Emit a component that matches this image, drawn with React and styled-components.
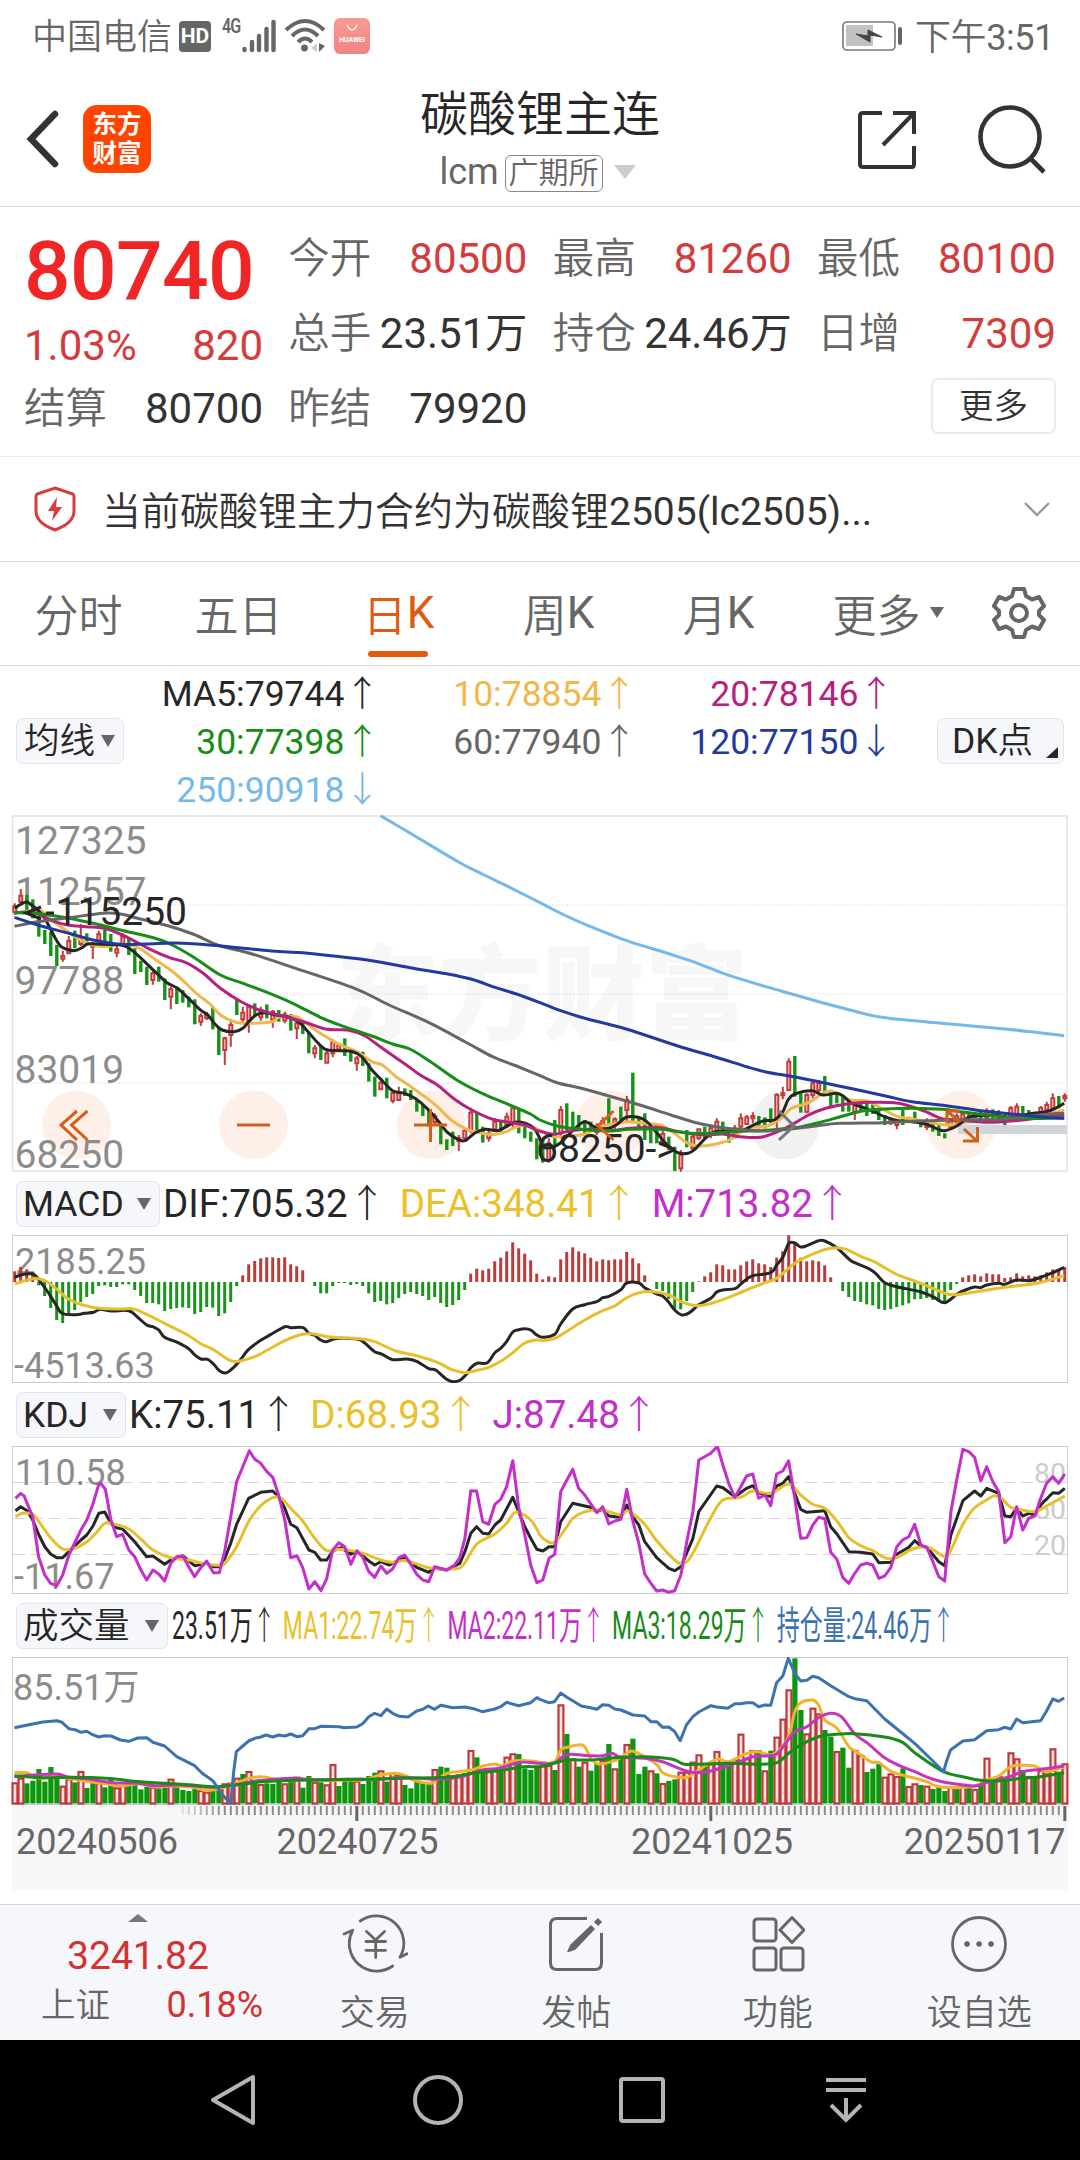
import React from "react"
import styled, { createGlobalStyle } from "styled-components"

const GlobalStyle = createGlobalStyle`
  * {
    box-sizing: border-box;
  }
  body {
    margin: 0;
    background: #fff;
    font-family: Roboto, "Noto Sans CJK SC", sans-serif;
    color: #333;
  }
  svg {
    display: block;
    flex-shrink: 0;
  }
`

const RED = "#d23c3c"
const ORANGE = "#e05a10"

const Screen = styled.main`
  width: 1080px;
  height: 2160px;
  display: flex;
  flex-direction: column;
  overflow: hidden;
`

// keeps latin letters and digits at regular weight beside lighter hanzi
const Latin = styled.span`
  font-weight: 400;
`

/* status bar */

const StatusBar = styled.div`
  height: 74px;
  padding: 0 26px 2px 32px;
  display: flex;
  align-items: center;
  justify-content: space-between;
  font-size: 35px;
  font-weight: 350;
  color: #666;
`

StatusBar.Group = styled.div`
  display: flex;
  align-items: center;
  white-space: nowrap;
`

StatusBar.Name = styled.span`
  line-height: 40px;
  padding-top: 3px;
`

StatusBar.Time = styled.span`
  margin-left: 12px;
  padding-top: 3px;
  font-size: 36px;
  line-height: 40px;
  letter-spacing: -0.4px;
`

const HdBadge = styled.span`
  width: 32px;
  height: 31px;
  margin: 0 11px 0 7px;
  border-radius: 4px;
  background: #666;
  color: #fff;
  font-size: 21px;
  font-weight: 700;
  line-height: 31px;
  text-align: center;
`

const NetType = styled.span`
  align-self: flex-start;
  width: 20px;
  margin-top: 1px;
  font-size: 20px;
  font-weight: 600;
  line-height: 20px;
  letter-spacing: -1px;
  transform: scaleX(0.8);
  transform-origin: left;
`

const StoreBadge = styled.span`
  width: 36px;
  height: 36px;
  margin-left: 9px;
  border-radius: 6px;
  background: linear-gradient(#f79a94, #f08484);
`

/* title bar */

const Header = styled.header`
  height: 133px;
  padding: 0 33px 0 26px;
  border-bottom: 1px solid #d6d6d6;
  display: grid;
  grid-template-columns: 1fr auto 1fr;
  align-items: center;
`

Header.Side = styled.div`
  display: flex;
  align-items: center;
  justify-content: ${(p) => (p.$end ? "flex-end" : "flex-start")};
  gap: ${(p) => (p.$end ? 60 : 22)}px;
  padding-bottom: ${(p) => (p.$end ? 1 : 2)}px;
`

Header.Title = styled.h1`
  margin: -5px 0 0;
  padding-left: 7px;
  font-size: 48px;
  font-weight: 350;
  line-height: 64px;
  color: #262626;
  text-align: center;
`

Header.Sub = styled.div`
  display: flex;
  align-items: center;
  justify-content: center;
  padding: 5px 0 0 2px;
  font-size: 36px;
  line-height: 40px;
  color: #666;
`

const Exchange = styled.span`
  margin: 2px 11px 0 6px;
  padding: 0 3px;
  height: 37px;
  border: 1px solid #888;
  border-radius: 6px;
  font-size: 30px;
  font-weight: 350;
  line-height: 34px;
`

const Logo = styled.div`
  width: 68px;
  height: 68px;
  border-radius: 14px;
  background: #ff4400;
  color: #fff;
  font-size: 24.5px;
  font-weight: 700;
  line-height: 29px;
  padding-top: 5px;
  text-align: center;
`

const Triangle = styled.i`
  width: 0;
  height: 0;
  border: solid transparent;
  border-width: ${(p) => p.$h}px ${(p) => p.$w / 2}px 0;
  border-top-color: ${(p) => p.$color || "#666"};
`

/* quote */

const Quote = styled.section`
  height: 250px;
  border-bottom: 1px solid #ebebeb;
  padding: 14px 24px 0 24px;
  display: grid;
  grid-template-columns: repeat(4, 239px);
  grid-template-rows: 75px 75px 75px;
  justify-content: space-between;
`

Quote.Main = styled.div`
  grid-row: span 2;
  display: flex;
  flex-direction: column;
`

Quote.Price = styled.strong`
  font-size: 82px;
  font-weight: 500;
  line-height: 100px;
  height: 100px;
  letter-spacing: -0.6px;
  color: #f02626;
`

const Pair = styled.div`
  display: flex;
  align-items: center;
  justify-content: space-between;
  white-space: nowrap;
  font-size: 42px;
  line-height: 50px;
  color: ${(p) => (p.$up ? RED : "#333")};
`

Pair.Label = styled.span`
  font-size: 41.5px;
  font-weight: 350;
  color: #666;
`

const MoreButton = styled.button`
  grid-column: 4;
  justify-self: end;
  align-self: center;
  width: 125px;
  height: 56px;
  margin-bottom: 5px;
  padding: 0;
  background: #fff;
  border: 2px solid #ebebeb;
  border-radius: 7px;
  font: 350 34.5px/48px Roboto, "Noto Sans CJK SC", sans-serif;
  color: #333;
`

const Notice = styled.section`
  height: 105px;
  padding: 0 29px 0 34px;
  border-bottom: 1px solid #d6d6d6;
  display: flex;
  align-items: center;
  font-size: 39px;
  font-weight: 350;
  color: #333;
`

Notice.Text = styled.span`
  flex: 1;
  margin-left: 26px;
  padding-bottom: 2px;
  white-space: nowrap;
`

/* period tabs */

const Tabs = styled.nav`
  height: 104px;
  border-bottom: 1px solid #d6d6d6;
  display: grid;
  grid-template-columns: repeat(6, 160px) 1fr;
`

const Tab = styled.div`
  position: relative;
  display: flex;
  align-items: center;
  justify-content: center;
  padding: 0 3px 2px ${(p) => p.$shift || 0}px;
  font-size: 44px;
  font-weight: 350;
  color: ${(p) => (p.$active ? ORANGE : "#666")};
  ${Triangle} {
    margin-left: 9px;
  }
  &::after {
    content: "";
    display: ${(p) => (p.$active ? "block" : "none")};
    position: absolute;
    bottom: 8px;
    left: 48px;
    width: 60px;
    height: 6px;
    border-radius: 3px;
    background: ${ORANGE};
  }
`

/* indicator legends */

const Averages = styled.div`
  height: 149px;
  padding: 0 16px;
  display: grid;
  grid-template-columns: 107px 257px 257px 257px 1fr;
  grid-template-rows: 48px 48px 49px;
  align-items: center;
  font-size: 35.5px;
`

Averages.Item = styled.span`
  grid-column: ${(p) => p.$col};
  grid-row: ${(p) => p.$row};
  text-align: right;
  white-space: nowrap;
  color: ${(p) => p.$color};
`

const Picker = styled.div`
  height: 46px;
  flex-shrink: 0;
  width: ${(p) => p.$width}px;
  margin-top: ${(p) => (p.$col ? 5 : 0)}px;
  grid-row: 2;
  grid-column: ${(p) => p.$col || "auto"};
  justify-self: ${(p) => (p.$col === 5 ? "end" : "start")};
  padding: 0 ${(p) => p.$pad || 8}px 0 ${(p) => p.$lead || 6}px;
  display: flex;
  align-items: center;
  justify-content: space-between;
  border: 1px solid #e2e4ea;
  border-radius: 7px;
  background: #f6f7fa;
  font-size: 35.5px;
  line-height: 44px;
  color: #262626;
  white-space: nowrap;
`

const Hanzi = styled.span`
  font-weight: 350;
`

const Corner = styled.i`
  align-self: flex-end;
  margin-bottom: 5px;
  margin-left: auto;
  border-style: solid;
  border-width: 0 0 11px 12px;
  border-color: transparent transparent #262626;
`

const Legend = styled.div`
  height: ${(p) => p.$h}px;
  padding-left: 16px;
  display: flex;
  align-items: center;
`

Legend.Values = styled.div`
  display: flex;
  gap: ${(p) => p.$gap}px;
  margin-left: ${(p) => p.$left || 3}px;
  padding-bottom: 8px;
  font-size: 38.5px;
  white-space: nowrap;
  transform: scaleX(${(p) => p.$squeeze || 1});
  transform-origin: left;
`

const Value = styled.span`
  color: ${(p) => p.$color};
`

const Arrow = styled.span`
  font-weight: 300;
`

const DateAxis = styled.div`
  height: 85px;
  margin: 0 12px 14px;
  background: #f7f7fa;
`

/* bottom bars */

const ActionBar = styled.footer`
  height: 136px;
  border-top: 1px solid #d2d4dd;
  background: #f6f7fa;
  display: grid;
  grid-template-columns: 274px repeat(4, 1fr);
`

const IndexBox = styled.div`
  display: flex;
  flex-direction: column;
  align-items: center;
  padding: 9px 0 0 2px;
  font-size: 39px;
  line-height: 42px;
  color: #d63030;
`

IndexBox.Up = styled.i`
  border: solid transparent;
  border-width: 0 10px 8px;
  border-bottom-color: #77777c;
  margin-bottom: 13px;
`

IndexBox.Row = styled.div`
  width: 222px;
  margin-top: 7px;
  margin-left: 28px;
  display: flex;
  justify-content: space-between;
  align-items: center;
  font-size: 36px;
`

IndexBox.Name = styled.span`
  font-size: 34.5px;
  font-weight: 350;
  color: #666;
`

const Action = styled.div`
  display: flex;
  flex-direction: column;
  align-items: center;
  gap: 15px;
  padding-top: 9px;
  font-size: 35px;
  font-weight: 350;
  line-height: 50px;
  color: #666;
`

const SystemNav = styled.div`
  height: 120px;
  background: #000;
  padding: 0 132px;
  display: grid;
  grid-template-columns: repeat(4, 1fr);
  align-items: center;
  justify-items: center;
`

/* chart data: traces hold "x,y" samples, 2.9037 per px across and 3 per px down,
   the second list starts at the middle of the screen */

const SX = 2.9037
const barX = (i) => 14.8 + i * 6

const points = (left, right) => {
  const read = (s, dx) =>
    s
      .trim()
      .split(/\s+/)
      .filter(Boolean)
      .map((p) => p.split(",").map(Number))
      .map(([x, y]) => [x / SX + dx, y / 3])
  return [...read(left, 0), ...read(right, 540)]
}

const curve = (pts) => {
  let d = `M${pts[0][0].toFixed(1)} ${pts[0][1].toFixed(1)}`
  for (let i = 0; i < pts.length - 1; i++) {
    const a = pts[i - 1] || pts[i]
    const b = pts[i]
    const c = pts[i + 1]
    const e = pts[i + 2] || c
    const n = [
      b[0] + (c[0] - a[0]) / 6,
      b[1] + (c[1] - a[1]) / 6,
      c[0] - (e[0] - b[0]) / 6,
      c[1] - (e[1] - b[1]) / 6,
      c[0],
      c[1],
    ].map((v) => v.toFixed(1))
    d += `C${n.join(" ")}`
  }
  return d
}

const straight = (pts) =>
  "M" + pts.map((p) => `${p[0].toFixed(1)} ${p[1].toFixed(1)}`).join("L")

const Trace = ({ data, color, width = 3, sharp }) => (
  <path
    d={(sharp ? straight : curve)(points(data[0], data[1]))}
    fill="none"
    stroke={color}
    strokeWidth={width}
    strokeLinejoin="round"
  />
)

const AVERAGES = [
  {
    color: "#f0b84c",
    data: [
      "43,310 78,304 120,303 150,330 190,360 230,388 270,405 310,410 350,402 400,412 450,448 510,492 570,550 610,582 640,615 680,635 720,640 790,635 810,622 860,620 890,640 930,670 980,700 1040,727 1080,755 1110,765 1150,800 1190,828 1240,865 1270,890 1310,930 1350,955 1400,970 1440,973 1470,965 1500,950 1530,945 1559,957",
      "8,965 40,980 90,978 130,972 170,952 210,942 260,935 300,940 350,945 390,970 430,1000 470,1008 520,1000 560,985 600,955 660,948 700,925 730,895 780,878 830,845 860,848 900,870 950,873 1000,900 1040,920 1100,930 1180,945 1250,935 1320,932 1400,925 1470,912 1522,900",
    ],
  },
  {
    color: "#262626",
    data: [
      "43,295 60,283 78,276 95,288 113,303 130,325 147,358 165,392 180,412 215,422 240,412 255,402 300,403 350,405 375,415 410,445 450,485 485,518 515,535 550,568 580,598 605,617 625,643 645,660 680,665 705,655 725,632 745,614 770,608 800,615 840,622 870,638 890,660 920,695 945,718 985,722 1020,724 1050,740 1080,780 1110,812 1140,842 1175,850 1205,865 1240,895 1270,930 1300,968 1330,988 1350,992 1380,968 1410,958 1445,962 1470,950 1495,937 1525,940 1550,955 1565,980",
      "10,1010 35,1012 60,998 95,962 130,935 165,955 200,955 225,942 250,922 285,922 310,935 340,970 370,1005 400,1028 430,1030 450,1018 480,985 510,965 550,963 590,960 620,945 650,932 680,930 705,905 720,870 740,852 790,842 820,855 860,850 880,858 905,880 940,893 970,905 1000,920 1040,932 1080,935 1120,942 1150,955 1175,962 1210,948 1240,925 1260,918 1320,916 1370,922 1420,912 1470,905 1500,893 1522,880",
    ],
  },
  {
    color: "#b8207e",
    data: [
      "43,308 100,308 150,332 200,346 250,350 310,357 370,382 430,415 490,442 540,458 590,490 640,535 700,575 760,602 830,620 890,638 950,658 1010,660 1060,678 1110,715 1180,765 1220,795 1270,825 1320,868 1370,900 1430,928 1480,937 1530,947 1560,962",
      "8,966 40,973 90,962 150,958 210,962 260,955 340,952 390,962 430,970 480,975 530,972 580,980 640,982 690,965 730,945 780,915 830,895 890,882 960,877 1030,878 1070,887 1120,905 1170,927 1220,930 1300,937 1400,930 1470,920 1522,915",
    ],
  },
  {
    color: "#178c17",
    data: [
      "43,308 120,312 200,325 280,342 350,360 450,385 500,405 560,440 640,495 700,518 770,545 850,580 930,622 1000,650 1080,678 1140,702 1190,717 1250,755 1330,812 1400,850 1480,885 1540,912",
      "0,930 50,948 120,958 200,963 260,958 350,958 400,965 440,970 500,970 560,965 640,962 700,957 760,950 820,935 880,918 940,902 1000,897 1080,895 1170,898 1220,905 1300,915 1400,925 1522,923",
    ],
  },
  {
    color: "#666666",
    data: [
      "42,349 110,335 200,323 300,310 350,312 400,325 490,348 560,372 640,408 720,428 850,472 1030,535 1130,585 1250,640 1350,695 1430,740 1500,768",
      "0,797 50,818 120,835 200,858 290,885 380,915 460,940 530,953 600,960 660,963 720,958 800,948 870,940 1000,938 1100,933 1200,930 1350,927 1450,915 1522,910",
    ],
  },
  {
    color: "#2339a0",
    data: [
      "42,322 110,345 200,370 270,390 350,403 420,402 500,399 560,401 650,409 800,424 880,428 960,437 1080,452 1200,475 1300,492 1370,508 1440,533 1500,552",
      "0,578 60,602 130,625 250,657 400,708 500,738 600,770 660,787 720,797 800,813 900,835 1000,857 1080,875 1180,887 1280,902 1400,915 1480,923 1522,925",
    ],
  },
  {
    color: "#74b9ea",
    data: [
      "1105,17 1200,75 1330,155 1400,192 1480,232",
      "0,278 70,315 140,347 200,372 260,395 370,430 450,457 560,500 700,543 820,578 900,600 970,618 1040,628 1200,643 1350,657 1450,668 1522,677",
    ],
  },
]

// colour, high, low and, for some, the body
const CANDLES = `r280 315,r237 280 257 275,g255 310,g268 325,g318 380,g360 402,g366 438,g405 468,r422 455 438 446,r378 432 393 430,
g362 415,r342 408 390 402,g370 405,r396 447 402 410,r362 405,g360 405,g372 425,r405 442 418 428,r370 410,g385 435,
g415 492,g452 486,g470 525,r480 524 490 510,g470 515,g505 570,r530 598 538 560,g530 582,g540 578,g560 592,
g568 643,r610 648 618 635,r605 630 614 624,g590 658,g650 735,r680 765 685 720,r628 710 645 675,g565 615,r590 640 608 628,r585 668 590 640,
g580 620,r590 632 600 622,g583 625,r600 653 605 630,g600 635,r605 640,g612 662,r630 687 640 655,g635 672,g665 730,
r705 745 715 730,g705 750,r715 760 730 758,r688 742 695 730,r700 725,g685 738,g720 755,r738 782 745 760,g725 768,g760 815,
g800 860,r805 840 818 838,g803 865,r840 880 850 872,r830 873 850 870,g835 858,g840 870,g868 905,g885 918,g900 950,
r910 945,g940 1003,g988 1020,g965 1008,r975 1023 985 992,r958 995 962 985,r893 970 908 962,g908 960,g950 998,r960 995 970 985,
r925 965 935 958,g933 965,r908 955 920 945,r890 955 895 940,g900 970,g945 985,g965 995,g985 1048,g985 1058,r985 1058 1000 1050,
g930 1010,r888 985 900 970,g880 960,g905 955,g915 960,g930 975,g935 965,r940 975,r922 965,g865 945,
r922 960 928 945,g890 940,r858 935 870 900,g788 940,g920 955,g910 990,g940 1000,g945 1000,r960 1005,g980 1020,
g1010 1083,r1020 1085 1035 1075,g960 1012,r970 1025 980 1015,r955 990 958 985,g950 985,r945 985,r925 968 935 962,g935 970,g958 998,
r945 985,r910 960 925 950,r915 945 922 942,r907 940 918 925,g918 955,g922 955,g895 940,r850 955 855 930,r830 868 850 856,r745 842 755 840,
g738 860,g850 908,r850 910 855 905,r815 865 820 855,r810 850,g798 845,g840 890,g848 880,g855 905,g868 905,
r870 930 885 905,g870 905,g880 918,g880 912,g895 930,g915 945,r925 945,r928 958 935 945,g900 945,r920 940,
g905 935,g930 952,r925 960,g935 965,g945 978,g970 985,r925 960,r910 945,r905 935,g910 930,
r908 925,g905 930,r895 932,g898 925,r900 930,g908 945,r888 930 895 920,r880 920 890 912,g888 915,g900 920,
r905 918,r888 912,r875 905 885 900,r850 900 865 895,g858 895,r850 875 858 865`
  .split(",")
  .map((s) => s.trim())
  .map((s) => ({ up: s[0] === "r", v: s.slice(1).split(" ").map((n) => n / 3) }))

const MACD_BARS = [
  32, 45, 38, 30, -10, -42, -78, -114, -123, -99, -84, -60, -45, -36, -12, -10,
  -15, -15, -7, -7, -24, -42, -63, -63, -67, -87, -81, -78, -76, -78, -96, -90,
  -75, -77, -102, -94, -60, -12, 20, 53, 63, 71, 74, 74, 72, 74, 53, 47, 35, 0,
  -12, -34, -34, -12, -3, -3, -9, -6, -12, -34, -60, -57, -67, -63, -48, -36,
  -30, -36, -42, -54, -45, -63, -75, -69, -54, -24, 25, 40, 35, 40, 62, 73, 92,
  119, 101, 85, 65, 25, 8, 17, 14, 68, 90, 104, 92, 86, 73, 62, 68, 65, 68, 68,
  90, 71, 56, 20, 0, -21, -27, -51, -80, -82, -57, -30, 2, 17, 29, 53, 50, 38,
  38, 50, 62, 68, 56, 53, 45, 73, 92, 140, 118, 73, 62, 65, 62, 50, 14, 0, -27,
  -45, -57, -60, -67, -70, -81, -84, -81, -75, -70, -64, -52, -51, -48, -54,
  -58, -60, -24, -6, 14, 20, 23, 17, 26, 23, 23, 12, 14, 26, 17, 20, 17, 20, 29,
  38, 37, 45,
]

const DIF = [
  "43,322 60,315 78,312 98,313 115,332 135,360 160,400 180,430 220,434 245,430 272,427 290,418 325,423 374,422 400,442 426,465 444,470 461,480 478,502 515,517 548,536 565,554 583,567 603,568 620,582 637,602 655,609 670,600 690,580 705,560 722,538 757,511 792,490 827,470 845,473 880,473 897,490 914,496 931,510 949,515 966,508 990,505 1040,508 1060,520 1088,545 1110,553 1140,569 1180,567 1210,574 1245,596 1265,600 1297,628 1315,635 1335,631 1355,612 1367,593 1385,580 1415,578 1437,548 1454,535 1471,515 1489,486 1506,479 1525,476 1541,480 1559,495",
  "8,502 43,493 60,462 95,417 130,404 165,395 182,383 200,379 235,359 252,339 287,339 304,353 339,372 356,378 374,397 391,420 409,434 427,432 444,420 461,404 496,385 513,366 531,360 566,356 583,342 600,328 618,317 670,308 687,285 705,262 722,221 740,219 757,231 775,227 809,212 827,213 862,233 897,267 914,278 966,303 1001,338 1036,350 1106,366 1141,380 1175,398 1210,373 1228,363 1262,351 1280,353 1297,345 1332,340 1350,343 1384,330 1420,332 1454,322 1489,308 1522,292",
]

const DEA = [
  "43,342 95,326 130,332 165,358 200,388 240,405 290,415 350,417 385,416 420,430 478,460 548,497 583,521 618,538 670,572 700,572 740,560 775,541 827,512 870,495 905,491 950,500 990,503 1050,507 1088,515 1150,543 1210,557 1270,577 1310,598 1350,608 1380,602 1419,592 1454,574 1489,548 1524,519 1559,510",
  "8,512 43,505 78,484 130,450 182,422 217,408 252,383 287,368 330,365 374,375 410,395 444,406 478,405 531,389 600,360 653,338 687,325 740,280 775,260 830,238 862,233 890,238 940,263 970,275 1036,313 1106,340 1175,370 1210,374 1262,366 1350,352 1450,338 1522,317",
]

const KDJ_J = [
  "45,985 60,970 70,978 95,1040 112,1160 130,1215 147,1240 165,1247 182,1215 200,1155 235,1080 252,1050 269,1005 287,943 293,940 306,958 322,1050 339,1100 356,1093 374,1140 391,1160 409,1200 426,1230 444,1200 461,1212 478,1233 496,1180 513,1160 531,1158 548,1190 565,1220 583,1193 600,1173 620,1208 637,1208 653,1140 670,1040 687,935 705,890 724,842 740,868 757,880 775,905 792,922 809,975 827,1050 844,1163 862,1157 879,1193 897,1257 914,1235 932,1262 949,1225 966,1140 984,1118 1001,1130 1019,1183 1036,1143 1053,1160 1071,1205 1088,1222 1106,1188 1123,1210 1140,1197 1158,1163 1175,1155 1193,1183 1210,1213 1228,1230 1245,1235 1262,1190 1297,1200 1320,1185 1335,1163 1350,1105 1367,962 1384,963 1402,1055 1419,1063 1437,1003 1454,988 1471,950 1489,872 1506,1010 1524,1095 1541,1185 1559,1238",
  "8,1230 26,1165 43,1153 60,965 78,930 95,898 112,955 130,975 165,1028 182,1010 200,1062 217,1053 235,1048 252,958 269,1050 287,1120 304,1212 322,1240 339,1263 356,1260 374,1267 391,1262 409,1215 427,1110 444,1025 461,870 496,850 515,829 531,885 548,940 566,982 583,950 600,918 618,912 635,985 653,975 670,1007 687,912 705,903 722,872 740,985 757,1105 775,1103 792,1065 809,1042 827,1046 844,1147 862,1168 879,1222 897,1240 914,1210 931,1185 949,1180 966,1185 984,1225 1001,1218 1019,1192 1036,1130 1053,1110 1071,1100 1088,1063 1106,1125 1123,1132 1141,1175 1158,1220 1175,1233 1193,1025 1210,930 1228,838 1245,845 1262,862 1280,933 1297,890 1315,935 1332,965 1350,1118 1367,1100 1384,1010 1402,1080 1419,1045 1437,1038 1454,985 1471,940 1489,920 1506,940 1524,912",
]

const KDJ_K = [
  "45,1022 60,1010 80,1023 95,1050 113,1095 130,1130 147,1152 165,1163 182,1163 200,1145 235,1110 252,1095 270,1068 287,1030 304,1026 322,1060 339,1073 356,1077 391,1115 426,1160 444,1158 478,1183 496,1170 531,1158 565,1187 600,1180 620,1190 637,1190 653,1165 670,1120 687,1063 722,985 757,967 792,963 809,980 827,1015 844,1063 862,1073 897,1140 914,1147 931,1170 949,1170 966,1143 990,1133 1019,1153 1036,1143 1071,1173 1088,1185 1106,1175 1130,1185 1158,1170 1175,1165 1210,1192 1245,1207 1262,1195 1297,1200 1335,1180 1350,1145 1367,1090 1384,1070 1402,1090 1419,1092 1437,1065 1454,1050 1489,982 1506,1025 1524,1070 1541,1105 1559,1138",
  "8,1143 26,1130 43,1130 60,1055 95,1000 130,1008 147,1012 165,1025 182,1018 200,1038 235,1042 252,1005 269,1040 287,1065 304,1115 339,1163 374,1195 391,1202 409,1190 444,1105 461,1025 513,948 531,953 566,980 600,955 618,947 635,968 670,980 687,948 705,940 722,920 757,1018 775,1027 827,1022 844,1070 862,1092 897,1145 931,1147 966,1152 984,1178 1019,1177 1036,1153 1071,1132 1088,1112 1106,1128 1123,1132 1158,1175 1175,1187 1193,1095 1228,992 1262,963 1280,978 1297,955 1332,970 1350,1038 1367,1040 1384,1015 1402,1038 1419,1030 1437,1035 1454,1005 1489,968 1506,970 1524,955",
]

const KDJ_D = [
  "45,1040 65,1030 95,1032 113,1055 147,1103 182,1137 217,1135 252,1115 280,1088 304,1060 330,1062 374,1077 409,1107 444,1140 496,1163 548,1170 600,1182 637,1186 653,1180 687,1130 722,1055 757,1007 792,983 815,983 844,1015 879,1053 914,1105 949,1142 990,1138 1053,1150 1106,1170 1140,1177 1180,1172 1245,1193 1315,1197 1345,1185 1384,1123 1437,1092 1471,1060 1489,1033 1506,1027 1541,1050 1559,1078",
  "0,1095 15,1110 43,1117 78,1070 95,1045 130,1025 180,1020 235,1035 252,1022 269,1030 304,1063 339,1112 391,1170 417,1180 444,1150 496,1043 531,990 583,982 618,963 670,970 722,942 757,975 792,1003 827,1015 862,1053 897,1103 931,1127 966,1142 1001,1163 1030,1165 1053,1153 1088,1135 1130,1133 1175,1160 1193,1140 1228,1063 1262,1013 1297,990 1320,977 1340,985 1367,1012 1400,1020 1437,1025 1471,1008 1524,978",
]

const VOLUMES = `r577 r563 g580 g572 g537 g575 g531 g560 r587 r565 g577 r543 g594 g575 r577 g592 g568 r592 r585 g585
g585 g598 g590 r590 g595 g590 r566 g585 g600 g603 g595 r600 r605 g600 g592 r580 r578 r563 g552 r543
g575 r582 g580 g582 g572 r580 g570 r560 g593 g558 r575 g577 r583 r522 g588 g572 g565 r572 g582 g558
g548 r541 g575 r548 r555 g585 g595 g570 g577 g580 r537 g530 g533 r555 r553 r550 r480 g502 g540 r540
r535 g545 r500 r490 g492 g535 g540 g530 r515 r525 g540 r343 g432 r505 g530 r515 g542 g520 r510 g462
r535 g500 r462 g446 g552 g530 r541 g550 r579 g573 g568 r545 r545 r515 r493 g520 r520 r483 g525 g520
r508 r431 r505 r480 g480 r541 g482 r440 r386 r298 g205 g360 r430 r353 r370 g420 g440 r483 g473 g533
r480 r495 g546 g536 g522 r560 r550 r558 g535 r588 r580 g585 r587 g597 g590 g603 r590 g590 r582 g592
r597 g580 r503 g575 r558 g560 r487 r505 g540 r558 g560 r540 r550 r475 g545 r520`
  .split(/\s+/)
  .map((s) => ({ up: s[0] === "r", y: s.slice(1) / 3 }))

const VOLUME_LINES = [
  {
    color: "#f0b42c",
    data: [
      "42,548 78,548 95,560 120,565 165,558 200,565 260,575 310,582 350,588 400,582 450,590 500,588 560,592 600,602 640,595 670,585 705,572 730,563 760,560 800,567 850,572 900,568 960,572 1010,570 1053,570 1106,555 1150,550 1180,558 1200,570 1245,580 1262,575 1297,550 1330,545 1370,540 1402,528 1437,522 1460,528 1489,513 1530,512 1560,515",
      "8,520 42,515 60,480 78,472 125,466 147,505 170,522 217,512 252,490 268,483 300,498 340,525 356,548 391,560 427,562 461,540 513,508 548,515 600,490 635,485 665,495 690,485 722,440 740,365 757,338 792,330 809,345 827,390 862,415 897,470 914,482 960,515 984,518 1020,545 1071,560 1123,575 1150,588 1193,593 1262,588 1297,570 1332,558 1367,530 1402,526 1437,528 1471,545 1522,530",
    ],
  },
  {
    color: "#c535bd",
    data: [
      "42,560 95,555 165,552 200,562 260,568 330,578 400,580 450,587 520,585 560,588 620,592 680,585 730,575 800,568 850,565 920,570 1000,568 1100,568 1160,562 1220,565 1280,568 1340,560 1400,540 1450,535 1510,517",
      "0,520 40,520 78,494 140,497 182,497 208,490 230,500 252,503 304,505 356,515 391,530 440,547 496,543 566,520 618,500 665,497 690,490 722,447 740,425 775,410 809,383 844,370 875,380 914,432 949,458 1001,503 1036,523 1088,545 1141,568 1193,580 1262,588 1297,577 1350,565 1402,545 1454,538 1522,528",
    ],
  },
  {
    color: "#178c17",
    data: [
      "42,557 120,563 200,562 280,563 330,566 380,573 450,578 560,585 620,590 700,583 760,575 820,572 900,570 1050,568 1180,565 1260,563 1320,560 1370,550 1450,542 1520,530",
      "0,530 40,520 78,510 147,510 217,503 300,500 385,508 420,523 480,522 560,520 635,523 690,517 722,490 757,465 809,440 862,433 914,431 1001,441 1053,457 1088,488 1172,545 1228,560 1280,571 1340,572 1400,565 1454,560 1522,548",
    ],
  },
  {
    color: "#3c72b0",
    sharp: true,
    data: [
      "42,413 80,405 125,396 165,392 180,397 200,416 218,419 235,427 252,424 269,434 287,441 304,437 322,438 350,450 374,454 400,444 426,443 444,457 478,468 513,500 565,527 587,550 618,572 650,620 670,640 678,550 686,485 705,468 722,453 740,445 757,441 772,435 792,441 809,435 827,438 844,432 862,440 879,437 897,416 914,416 931,409 984,410 1001,413 1036,411 1053,401 1071,380 1088,370 1106,377 1123,357 1140,370 1160,379 1185,381 1210,363 1228,358 1243,348 1262,358 1280,346 1315,353 1350,351 1375,356 1400,365 1437,357 1454,350 1471,337 1506,347 1541,338 1559,323",
      "0,328 25,338 42,335 60,309 78,322 120,348 147,353 165,358 182,344 200,346 217,357 235,360 270,375 304,378 322,395 339,395 356,412 374,411 391,425 407,452 425,405 444,380 461,366 496,347 513,351 545,355 566,341 583,341 600,338 618,338 635,350 653,345 670,346 687,278 705,258 721,205 740,250 757,273 775,271 792,259 809,263 844,287 897,320 914,326 949,332 1001,387 1088,460 1141,513 1172,545 1180,515 1192,480 1228,453 1262,449 1297,422 1332,419 1349,412 1367,417 1384,387 1402,398 1454,392 1471,363 1489,327 1506,334 1522,324",
    ],
  },
]

/* charts */

const ScaleText = styled.text`
  font-size: ${(p) => p.$size || 36}px;
  fill: ${(p) => p.$fill || "#8c8c8c"};
`

const Watermark = styled.text`
  font-family: "Noto Sans CJK SC", sans-serif;
  font-size: 103px;
  font-weight: 900;
  fill: #f7f7f7;
`

const ControlIcon = styled.path`
  fill: none;
  stroke: ${(p) => (p.$muted ? "#77777a" : "#d2601a")};
  stroke-width: 3px;
`

const PriceChart = () => (
  <svg width="1080" height="358" viewBox="0 5 1080 358">
    <Watermark x="336" y="222">
      东方财富
    </Watermark>
    <rect x="12.5" y="6" width="1054.5" height="355" fill="none" stroke="#e4e4e4" strokeWidth="1.6" />
    {[95, 184, 273].map((y) => (
      <path key={y} d={`M13 ${y}H1067`} stroke="#e2e2e2" strokeDasharray="2 1.5" />
    ))}
    {[76.5, 253.5, 431, 610, 785, 961].map((x, i) => (
      <circle key={x} cx={x} cy="315" r="34.4" fill={i === 4 ? "#f1f1f1" : "#fef0e8"} />
    ))}
    <rect x="958" y="315" width="109" height="9" fill="#d0d4db" />
    <ScaleText $size={39} x="15" y="44">127325</ScaleText>
    <ScaleText $size={39} x="15" y="95">112557</ScaleText>
    <ScaleText $size={39} x="14.5" y="184">97788</ScaleText>
    <ScaleText $size={39} x="14.5" y="273">83019</ScaleText>
    <ScaleText $size={39} x="14.5" y="358">68250</ScaleText>
    {CANDLES.map(({ up, v }, i) => {
      const [high, low, top, bottom] = v
      const x = barX(i)
      if (!up) {
        return <path key={i} d={`M${x} ${high}V${low}`} stroke="#149214" strokeWidth="3.4" />
      }
      const t = top || high + (low - high) * 0.25
      const b = bottom || high + (low - high) * 0.75
      return (
        <path
          key={i}
          d={`M${x} ${high}V${t}H${x - 1.5}V${b}H${x + 1.5}V${t}H${x}M${x} ${b}V${low}`}
          stroke="#c23c3c"
          strokeWidth="2"
          fill="#f8e0e0"
        />
      )
    })}
    {AVERAGES.map((line) => (
      <Trace key={line.color} {...line} />
    ))}
    <ScaleText $size={39} $fill="#262626" x="55.5" y="115">115250</ScaleText>
    <path d="M41 97L26 103L41 109M46 103H54" fill="none" stroke="#262626" strokeWidth="3" />
    <ScaleText $size={39} $fill="#262626" x="536" y="352">{"68250->"}</ScaleText>
    <ControlIcon d="M77 301L61 315L77 330M87.5 301L71.5 315L87.5 330" />
    <ControlIcon d="M237 315H270" />
    <ControlIcon d="M414 315H447M430.5 299V332" />
    <ControlIcon d="M613.5 301L598 316L613.5 330" />
    <ControlIcon $muted d="M779 301L794 316L779 330" />
    <ControlIcon d="M960 301H947V313.5M947 301L960 312M964 319L977 331M977.5 317V331H963" />
  </svg>
)

const MacdChart = () => (
  <svg width="1080" height="148" viewBox="0 65 1080 148">
    <rect x="12.5" y="65.5" width="1055" height="147" fill="none" stroke="#ccc" />
    <ScaleText x="15" y="104">2185.25</ScaleText>
    <ScaleText x="14" y="207.5">-4513.63</ScaleText>
    {MACD_BARS.map((v, i) => (
      <rect
        key={i}
        x={barX(i) - 1.6}
        y={v > 0 ? 112 - v / 3 : 112}
        width="3"
        height={Math.abs(v) / 3}
        fill={v > 0 ? "#b83c3c" : "#1c921c"}
      />
    ))}
    <Trace data={DIF} color="#262626" />
    <Trace data={DEA} color="#e6c02c" />
  </svg>
)

const KdjChart = () => (
  <svg width="1080" height="148" viewBox="0 276 1080 148">
    <rect x="12.5" y="276.5" width="1055" height="147" fill="none" stroke="#ccc" />
    {[312.5, 348.5, 384.5].map((y, i) => (
      <React.Fragment key={y}>
        <path d={`M13 ${y}H1067`} stroke="#d6d6d6" strokeDasharray="12 6" />
        <ScaleText $size={28.5} $fill="#ccc" textAnchor="end" x="1066" y={y}>
          {80 - i * 30}
        </ScaleText>
      </React.Fragment>
    ))}
    <ScaleText x="15" y="315">110.58</ScaleText>
    <ScaleText x="14" y="419">-11.67</ScaleText>
    <Trace sharp data={KDJ_K} color="#262626" />
    <Trace data={KDJ_D} color="#e6c02c" />
    <Trace sharp data={KDJ_J} color="#c42ecb" />
  </svg>
)

const VolumeChart = () => (
  <svg width="1080" height="148" viewBox="0 67 1080 148">
    <rect x="12.5" y="67.5" width="1055" height="147" fill="none" stroke="#ccc" />
    <ScaleText x="13" y="110">85.51万</ScaleText>
    {VOLUMES.map(({ up, y }, i) =>
      up ? (
        <rect key={i} x={barX(i) - 2.3} y={y + 1} width="4.9" height={212.5 - y} fill="#fbe4e4" stroke="#be3a3a" strokeWidth="2.2" />
      ) : (
        <rect key={i} x={barX(i) - 2.5} y={y} width="5.2" height={213.5 - y} fill="#0c960c" />
      )
    )}
    {VOLUME_LINES.map((line) => (
      <Trace key={line.color} {...line} />
    ))}
  </svg>
)

const DateScale = () => (
  <svg width="1056" height="85" viewBox="12 0 1056 85">
    {Array.from({ length: 148 }, (_, n) => n + 28).map((i) => {
      const major = i === 57 || i === 116 || i === 175
      return (
        <path
          key={i}
          d={`M${barX(i)} 1V${major ? 16 : 10}`}
          stroke={major ? "#666" : "#8a8a8a"}
          strokeWidth={major ? 3 : 2}
          opacity={Math.min(1, (i - 26) / 9)}
        />
      )
    })}
    <ScaleText $fill="#666" x="16" y="49">20240506</ScaleText>
    <ScaleText $fill="#666" x="276.5" y="49">20240725</ScaleText>
    <ScaleText $fill="#666" x="631" y="49">20241025</ScaleText>
    <ScaleText $fill="#666" x="1065.5" y="49" textAnchor="end">20250117</ScaleText>
  </svg>
)

const legendColors = {
  black: "#262626",
  yellow: "#ebc02a",
  purple: "#c42ecb",
  green: "#178c17",
  blue: "#3c72b0",
}

const LegendValue = ({ color, children, as: Box = Value, arrow = "↑", ...rest }) => (
  <Box $color={legendColors[color] || color} {...rest}>
    {children}
    <Arrow>{arrow}</Arrow>
  </Box>
)

const Average = (props) => <LegendValue as={Averages.Item} {...props} />

export default () => {
  return (
    <Screen>
      <GlobalStyle />
      <StatusBar>
        <StatusBar.Group>
          <StatusBar.Name>中国电信</StatusBar.Name>
          <HdBadge>HD</HdBadge>
          <NetType>4G</NetType>
          <svg width="34" height="36" viewBox="0 0 34 36" stroke="#666" strokeWidth="4.4" strokeLinecap="round">
            <path d="M2.5 31V32M10 24V32M17 18V32M24.5 11V32M31.5 4V32" />
          </svg>
          <svg width="49" height="36" viewBox="-9 0 49 36" fill="none" stroke="#666" strokeWidth="4">
            <path d="M1 12Q20 -6 39 12M7 18Q20 5 33 18M13 24Q20 17 27 24" />
            <circle cx="19.5" cy="30" r="3.4" fill="#666" stroke="none" />
            <path d="M32 25V34L26 30z" fill="#ccc" stroke="none" />
            <path d="M34 25V34L40 28z" fill="#666" stroke="none" />
          </svg>
          <StoreBadge>
            <svg width="36" height="36" viewBox="0 0 36 36">
              <path d="M13 7Q18 17 23 7" fill="none" stroke="#fff" strokeWidth="1.3" />
              <text x="18" y="24" fill="#fff" fontSize="7" fontWeight="700" textAnchor="middle">
                HUAWEI
              </text>
            </svg>
          </StoreBadge>
        </StatusBar.Group>
        <StatusBar.Group>
          <svg width="61" height="30" viewBox="0 0 61 30">
            <rect x="1" y="1" width="52" height="28" rx="4" fill="none" stroke="#777" strokeWidth="1.6" />
            <rect x="4" y="4" width="27" height="21" fill="#c2c2c2" />
            <path d="M14 13L26 15L26 9L40 16L28 14L28 21z" fill="#444" stroke="#444" />
            <rect x="56" y="6" width="4" height="18" rx="2" fill="#666" />
          </svg>
          <StatusBar.Time>
            下午<Latin>3:51</Latin>
          </StatusBar.Time>
        </StatusBar.Group>
      </StatusBar>

      <Header>
        <Header.Side>
          <svg width="35" height="60" viewBox="0 0 35 60" fill="none" stroke="#333" strokeWidth="6.5" strokeLinecap="round">
            <path d="M29 5L5 30L29 55" />
          </svg>
          <Logo>
            东方
            <br />
            财富
          </Logo>
        </Header.Side>
        <div>
          <Header.Title>碳酸锂主连</Header.Title>
          <Header.Sub>
            lcm
            <Exchange>广期所</Exchange>
            <Triangle $w={22} $h={14} $color="#ccc" />
          </Header.Sub>
        </div>
        <Header.Side $end>
          <svg width="60" height="60" viewBox="0 0 60 60" fill="none" stroke="#333" strokeWidth="4">
            <path d="M25 3H6Q3 3 3 6V54Q3 57 6 57H55Q57 57 57 54V36M36 3H57V24M57 3L26 35" />
          </svg>
          <svg width="70" height="70" viewBox="0 0 70 70" fill="none" stroke="#333" strokeWidth="4.6">
            <circle cx="33" cy="32" r="29.5" />
            <path d="M53 53L67 67" />
          </svg>
        </Header.Side>
      </Header>

      <Quote>
        <Quote.Main>
          <Quote.Price>80740</Quote.Price>
          <Pair $up>
            <span>1.03%</span>
            <span>820</span>
          </Pair>
        </Quote.Main>
        <Pair $up>
          <Pair.Label>今开</Pair.Label>80500
        </Pair>
        <Pair $up>
          <Pair.Label>最高</Pair.Label>81260
        </Pair>
        <Pair $up>
          <Pair.Label>最低</Pair.Label>80100
        </Pair>
        <Pair>
          <Pair.Label>总手</Pair.Label>23.51万
        </Pair>
        <Pair>
          <Pair.Label>持仓</Pair.Label>24.46万
        </Pair>
        <Pair $up>
          <Pair.Label>日增</Pair.Label>7309
        </Pair>
        <Pair>
          <Pair.Label>结算</Pair.Label>80700
        </Pair>
        <Pair>
          <Pair.Label>昨结</Pair.Label>79920
        </Pair>
        <MoreButton>更多</MoreButton>
      </Quote>

      <Notice>
        <svg width="42" height="46" viewBox="0 0 42 46" fill="none" stroke="#d63c3c" strokeWidth="3">
          <path d="M21 2L39 8Q40 9 40 11V25Q40 37 21 44Q2 37 2 25V11Q2 9 3 8z" />
          <path d="M23 11L14 25H20L18 35L28 21H22z" fill="#d63c3c" stroke="none" />
        </svg>
        <Notice.Text>
          当前碳酸锂主力合约为碳酸锂<Latin>2505(lc2505)...</Latin>
        </Notice.Text>
        <svg width="28" height="16" viewBox="0 0 28 16" fill="none" stroke="#999" strokeWidth="2.4">
          <path d="M2 2L14 14L26 2" />
        </svg>
      </Notice>

      <Tabs>
        <Tab>分时</Tab>
        <Tab>五日</Tab>
        <Tab $active>
          日<Latin>K</Latin>
        </Tab>
        <Tab>
          周<Latin>K</Latin>
        </Tab>
        <Tab>
          月<Latin>K</Latin>
        </Tab>
        <Tab $shift={19}>
          更多
          <Triangle $w={14} $h={11} />
        </Tab>
        <Tab>
          <svg width="54" height="54" viewBox="0 0 54 54" fill="none" stroke="#666" strokeWidth="4" strokeLinejoin="round">
            <path d="M22 3H32L34 10L40 13.5L47 11L52 20L47 25V29L52 34L47 43L40 40.5L34 44L32 51H22L20 44L14 40.5L7 43L2 34L7 29V25L2 20L7 11L14 13.5L20 10z" />
            <circle cx="27" cy="27" r="8" />
          </svg>
        </Tab>
      </Tabs>

      <Averages>
        <Picker $width={108} $col={1} $lead={7}>
          <Hanzi>均线</Hanzi>
          <Triangle $w={14} $h={12} />
        </Picker>
        <Average $row={1} $col={2} color="#262626">MA5:79744</Average>
        <Average $row={1} $col={3} color="#f0b84c">10:78854</Average>
        <Average $row={1} $col={4} color="#b8207e">20:78146</Average>
        <Average $row={2} $col={2} color="#178c17">30:77398</Average>
        <Average $row={2} $col={3} color="#666">60:77940</Average>
        <Average $row={2} $col={4} color="#2339a0" arrow="↓">120:77150</Average>
        <Average $row={3} $col={2} color="#74b9ea" arrow="↓">250:90918</Average>
        <Picker $width={127} $col={5} $pad={5} $lead={14}>
          DK<Hanzi>点</Hanzi>
          <Corner />
        </Picker>
      </Averages>
      <PriceChart />

      <Legend $h={62}>
        <Picker $width={144}>
          MACD
          <Triangle $w={15} $h={12} />
        </Picker>
        <Legend.Values $gap={13.5}>
          <LegendValue color="black">DIF:705.32</LegendValue>
          <LegendValue color="yellow">DEA:348.41</LegendValue>
          <LegendValue color="purple">M:713.82</LegendValue>
        </Legend.Values>
      </Legend>
      <MacdChart />

      <Legend $h={63}>
        <Picker $width={110}>
          KDJ
          <Triangle $w={15} $h={12} />
        </Picker>
        <Legend.Values $gap={12.5}>
          <LegendValue color="black">K:75.11</LegendValue>
          <LegendValue color="yellow">D:68.93</LegendValue>
          <LegendValue color="purple">J:87.48</LegendValue>
        </Legend.Values>
      </Legend>
      <KdjChart />

      <Legend $h={63}>
        <Picker $width={152}>
          <Hanzi>成交量</Hanzi>
          <Triangle $w={15} $h={12} />
        </Picker>
        <Legend.Values $gap={12} $left={4} $squeeze={0.597}>
          <LegendValue color="black">23.51万</LegendValue>
          <LegendValue color="yellow">MA1:22.74万</LegendValue>
          <LegendValue color="purple">MA2:22.11万</LegendValue>
          <LegendValue color="green">MA3:18.29万</LegendValue>
          <LegendValue color="blue">持仓量:24.46万</LegendValue>
        </Legend.Values>
      </Legend>
      <VolumeChart />
      <DateAxis>
        <DateScale />
      </DateAxis>

      <ActionBar>
        <IndexBox>
          <IndexBox.Up />
          3241.82
          <IndexBox.Row>
            <IndexBox.Name>上证</IndexBox.Name>0.18%
          </IndexBox.Row>
        </IndexBox>
        <Action>
          <svg width="66" height="60" viewBox="0 0 66 60" fill="none" stroke="#666" strokeWidth="2.8" strokeLinecap="round" strokeLinejoin="round">
            <path d="M18.3 7A27.5 27.5 0 0 1 58 43.3L65 39.7M2 20L10.7 16.3A27.5 27.5 0 0 0 50.7 52" />
            <path d="M24.5 17.5L33.7 26L42.5 17.5M33.7 26V43.5M24 27.5H43.5M24 36.3H43.5" />
          </svg>
          交易
        </Action>
        <Action>
          <svg width="58" height="60" viewBox="0 0 58 60" fill="none" stroke="#666" strokeWidth="3">
            <path d="M40 4.5H10Q3.5 4.5 3.5 11V49Q3.5 55.5 10 55.5H48Q54.5 55.5 54.5 49V19" />
            <path d="M21 37.5L24 31L44 12L47 15L28 35z" fill="#666" strokeWidth="1.6" strokeLinejoin="round" />
            <path d="M49 10L53 6" strokeWidth="6" />
          </svg>
          发帖
        </Action>
        <Action>
          <svg width="54" height="60" viewBox="0 0 54 60" fill="none" stroke="#666" strokeWidth="3">
            <rect x="3" y="5" width="22" height="22" rx="3" />
            <rect x="3" y="34" width="22" height="22" rx="3" />
            <rect x="30" y="34" width="22" height="22" rx="3" />
            <path d="M41 3.5L53 16L41 28.5L29 16z" strokeLinejoin="round" />
          </svg>
          功能
        </Action>
        <Action>
          <svg width="60" height="60" viewBox="0 0 60 60" fill="none" stroke="#666" strokeWidth="2.8">
            <circle cx="30" cy="30" r="26.5" />
            <path d="M18 30h.1M30 30h.1M42 30h.1" strokeWidth="5.5" strokeLinecap="round" />
          </svg>
          设自选
        </Action>
      </ActionBar>

      <SystemNav>
        <svg width="54" height="54" viewBox="0 0 54 54" fill="none" stroke="#b4b4b4" strokeWidth="4" strokeLinejoin="round">
          <path d="M46 4V50L6 27z" />
        </svg>
        <svg width="54" height="54" viewBox="0 0 54 54" fill="none" stroke="#b4b4b4" strokeWidth="4">
          <circle cx="27" cy="27" r="23" />
        </svg>
        <svg width="54" height="54" viewBox="0 0 54 54" fill="none" stroke="#b4b4b4" strokeWidth="4">
          <rect x="6" y="6" width="42" height="42" rx="2" />
        </svg>
        <svg width="54" height="54" viewBox="0 0 54 54" fill="none" stroke="#b4b4b4" strokeWidth="4">
          <path d="M7 7H47M7 17H47M27 25V46M12 32L27 47L42 32" />
        </svg>
      </SystemNav>
    </Screen>
  )
}
